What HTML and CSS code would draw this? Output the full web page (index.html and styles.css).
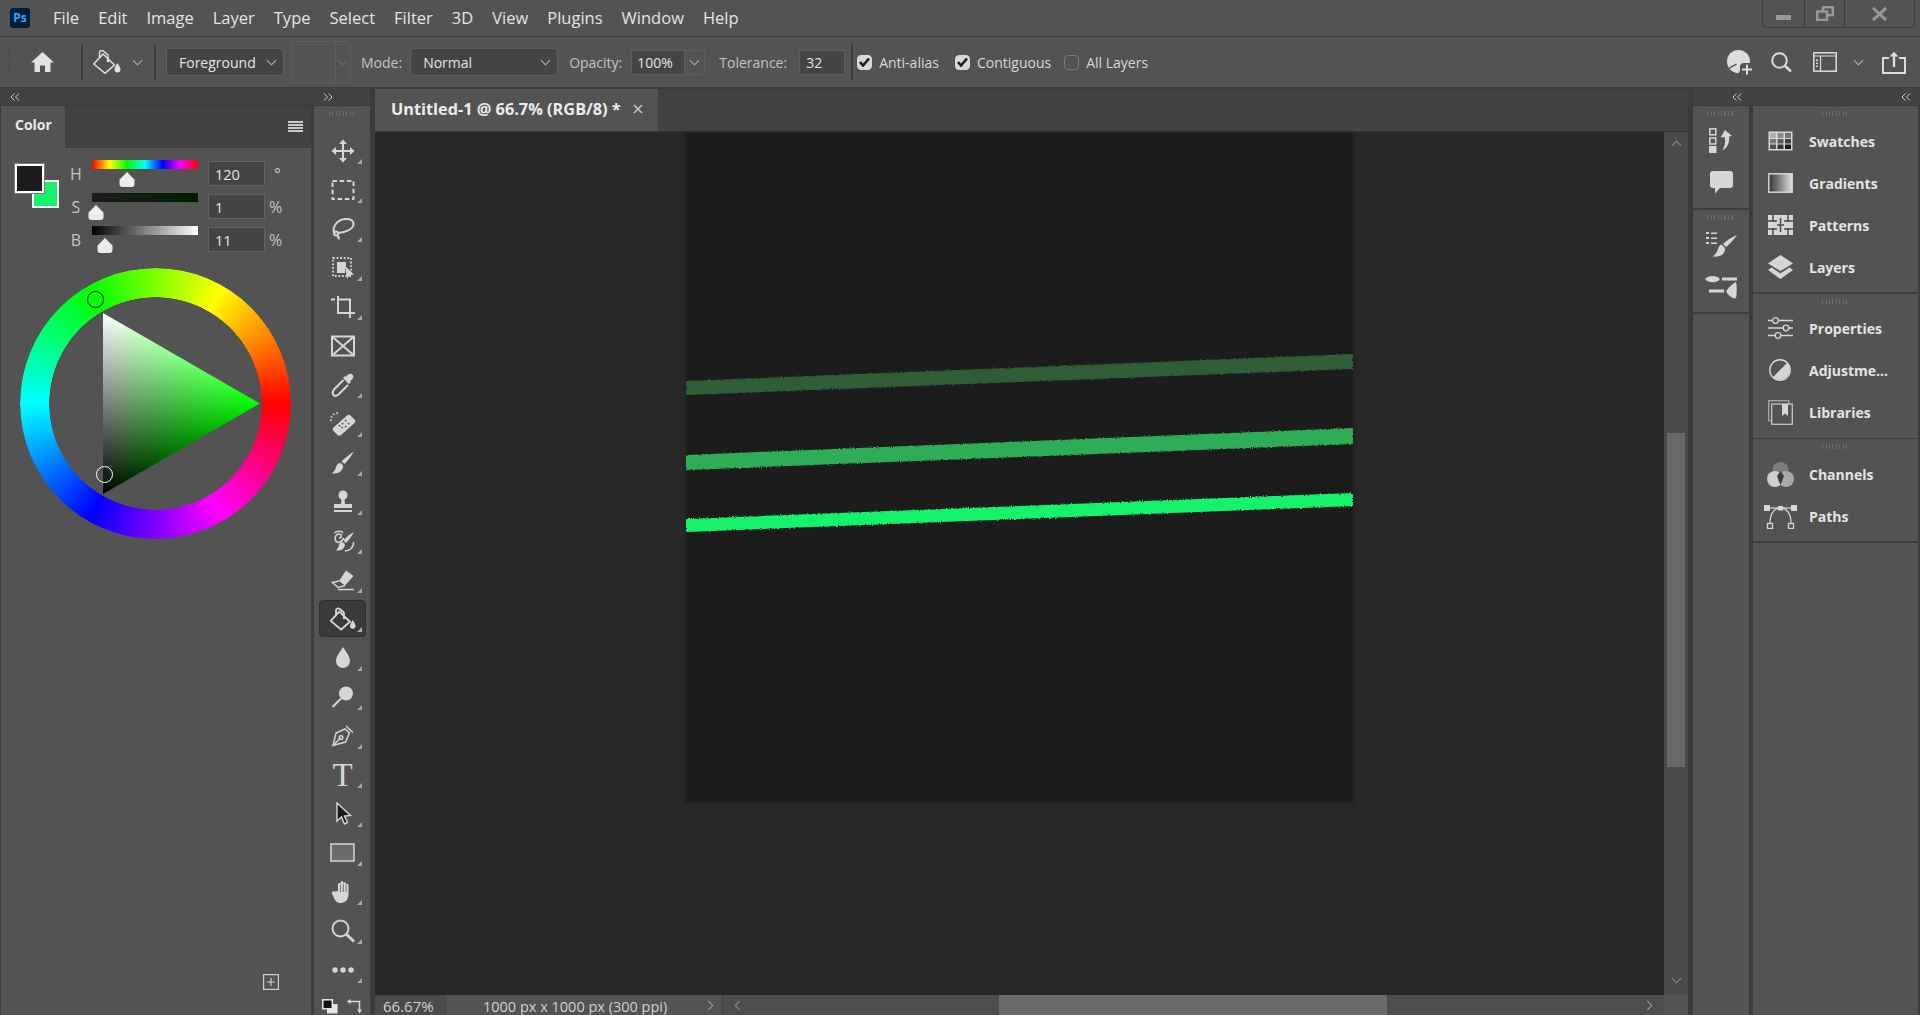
FILE: index.html
```html
<!DOCTYPE html>
<html lang="en">
<head>
    <meta charset="UTF-8">
    <meta name="viewport" content="width=device-width, initial-scale=1.0">
    <title>Untitled-1 @ 66.7% (RGB/8) *</title>
    <link rel="stylesheet" href="styles.css">
</head>
<body>

    <!-- Menu bar -->
    <header class="menubar">
        <div class="ps-logo">Ps</div>
        <nav class="menu">
            <span>File</span>
            <span>Edit</span>
            <span>Image</span>
            <span>Layer</span>
            <span>Type</span>
            <span>Select</span>
            <span>Filter</span>
            <span>3D</span>
            <span>View</span>
            <span>Plugins</span>
            <span>Window</span>
            <span>Help</span>
        </nav>
        <div class="window-controls">
            <div class="win-btn win-min">
                <svg width="15" height="5"><rect width="15" height="5" fill="#999"/></svg>
            </div>
            <div class="win-btn win-restore">
                <svg width="18" height="15" fill="none" stroke="#999" stroke-width="2.4"><rect x="7" y="1.2" width="9.8" height="8"/><rect x="1.2" y="5.5" width="9.8" height="8.3" fill="#535353"/></svg>
            </div>
            <div class="win-btn win-close">
                <svg width="15" height="14" stroke="#999" stroke-width="3"><path d="M1 1l13 12M14 1L1 13"/></svg>
            </div>
        </div>
    </header>

    <!-- Tool options -->
    <section class="optionsbar">
        <div class="gripper-v"></div>
        <svg class="opt-home" width="23" height="20" viewBox="0 0 23 20" fill="#e2e2e2"><path d="M11.5 0 0 10.500h3.500V20h5.500v-6.500h5V20h5.500v-9.500H23z"/></svg>
        <div class="opt-sep sep-home"></div>
        <svg class="opt-bucket" width="28" height="24" viewBox="0 0 28 24" fill="none" stroke="#e2e2e2" stroke-width="1.500">
            <path d="M10 4 .8 14 12 23.300 21.500 15z"/>
            <path d="M6.500 8V3c0-3 3-3 5-1l3.500 3v6"/>
            <circle cx="15" cy="11" r="1.300" fill="#e2e2e2" stroke="none"/>
            <path d="M24.500 13c1.500 2.500 3 4.500 3 6.500a3 3 0 0 1-6 0c0-2 1.500-4 3-6.500z" fill="#e2e2e2" stroke="none"/>
        </svg>
        <div class="chev chev-bucket"></div>
        <div class="opt-sep sep-bucket"></div>
        <div class="dropdown dd-fill">Foreground<div class="chev"></div></div>
        <div class="swatch-off"><div class="chev"></div></div>
        <label class="opt-label lbl-mode">Mode:</label>
        <div class="dropdown dd-mode">Normal<div class="chev"></div></div>
        <label class="opt-label lbl-opacity">Opacity:</label>
        <div class="combo"><span class="combo-value">100%</span><span class="combo-arrow"><span class="chev"></span></span></div>
        <label class="opt-label lbl-tolerance">Tolerance:</label>
        <div class="opt-input">32</div>
        <div class="opt-sep sep-tolerance"></div>
        <div class="check on cb-first"><svg width="11" height="10" viewBox="0 0 11 10"><path d="M1 5l3 3.500L10 1.500" fill="none" stroke="#1c1c1c" stroke-width="2.600"/></svg></div>
        <span class="check-label">Anti-alias</span>
        <div class="check on cb-next"><svg width="11" height="10" viewBox="0 0 11 10"><path d="M1 5l3 3.500L10 1.500" fill="none" stroke="#1c1c1c" stroke-width="2.600"/></svg></div>
        <span class="check-label">Contiguous</span>
        <div class="check cb-last"></div>
        <span class="check-label">All Layers</span>

        <div class="opt-right">
            <svg width="26" height="25" viewBox="0 0 26 25">
                <circle cx="11.500" cy="11.500" r="11.500" fill="#dcdcdc"/>
                <path d="M2.500 18.500C5 15.500 8 15.500 9.500 14M13.500 24l-1-2.500" fill="none" stroke="#535353" stroke-width="1.500"/>
                <path d="M17 13h9v12H13v-8a4 4 0 0 1 4-4z" fill="#535353"/>
                <path d="M20 14.500v10M15 19.500h10" stroke="#dcdcdc" stroke-width="2" fill="none"/>
            </svg>
            <svg width="21" height="20" viewBox="0 0 21 20" fill="none" stroke="#dcdcdc" stroke-width="2"><circle cx="8.500" cy="8.500" r="7.300"/><path d="M13.800 13.800 20 19.500" stroke-width="2.600"/></svg>
            <svg class="opt-ws" width="24" height="20" viewBox="0 0 24 20" fill="none" stroke="#dcdcdc" stroke-width="1.500"><rect x=".8" y=".8" width="22.400" height="18.400"/><path d="M.8 4h22.400M7.500 4v15" stroke-width="1.200"/><path d="M4 7.500v1.500M4 10.500V12M4 13.500V15" stroke-width="2"/></svg>
            <div class="chev"></div>
            <svg class="opt-share" width="24" height="23" viewBox="0 0 24 23" fill="none" stroke="#dcdcdc" stroke-width="2"><path d="M7 7H1v15h22V7h-6"/><path d="M12 16V2" stroke-width="2.400"/><path d="M7.500 5.500 12 .8l4.500 4.700z" fill="#dcdcdc" stroke="none"/></svg>
        </div>
    </section>

    <main class="workspace">

        <!-- Left dock: color panel and tools -->
        <div class="left-dock">
            <div class="dock-head dock-head-left">
                <svg width="10" height="8" viewBox="0 0 10 8" fill="none" stroke="#d0d0d0"><path d="M4.500.5 1 4l3.500 3.500M9 .5 5.500 4 9 7.500"/></svg>
                <svg class="head-expand" width="10" height="8" viewBox="0 0 10 8" fill="none" stroke="#d0d0d0"><path d="M1 .5 4.500 4 1 7.500M5.500.5 9 4 5.500 7.500"/></svg>
            </div>
            <div class="left-body">
                <section class="color-panel">
                    <div class="panel-tabs">
                        <div class="panel-tab">Color</div>
                        <div class="panel-menu"><i></i><i></i><i></i><i></i></div>
                    </div>
                    <div class="color-top">
                        <div class="fg-bg">
                            <div class="bg-swatch"></div>
                            <div class="fg-swatch"></div>
                        </div>
                        <div class="hsb">
                            <div class="hsb-row">
                                <span class="hsb-label">H</span>
                                <div class="slider">
                                    <div class="bar bar-h"></div>
                                    <svg class="thumb" style="margin-left: 27px" width="16" height="15" viewBox="0 0 16 15"><path d="M8 0l7.500 7.500V12a3 3 0 0 1-3 3h-9a3 3 0 0 1-3-3V7.500z" fill="#ececec"/></svg>
                                </div>
                                <div class="hsb-input">120</div>
                                <span class="hsb-unit unit-deg">°</span>
                            </div>
                            <div class="hsb-row">
                                <span class="hsb-label">S</span>
                                <div class="slider">
                                    <div class="bar bar-s"></div>
                                    <svg class="thumb" style="margin-left: -4px" width="16" height="15" viewBox="0 0 16 15"><path d="M8 0l7.500 7.500V12a3 3 0 0 1-3 3h-9a3 3 0 0 1-3-3V7.500z" fill="#ececec"/></svg>
                                </div>
                                <div class="hsb-input">1</div>
                                <span class="hsb-unit">%</span>
                            </div>
                            <div class="hsb-row">
                                <span class="hsb-label">B</span>
                                <div class="slider">
                                    <div class="bar bar-b"></div>
                                    <svg class="thumb" style="margin-left: 5px" width="16" height="15" viewBox="0 0 16 15"><path d="M8 0l7.500 7.500V12a3 3 0 0 1-3 3h-9a3 3 0 0 1-3-3V7.500z" fill="#ececec"/></svg>
                                </div>
                                <div class="hsb-input">11</div>
                                <span class="hsb-unit">%</span>
                            </div>
                        </div>
                    </div>
                    <div class="wheel">
                        <div class="wheel-ring"></div>
                        <div class="wheel-triangle"></div>
                        <div class="marker marker-hue"></div>
                        <div class="marker marker-value"></div>
                    </div>
                    <svg class="panel-add" width="16" height="16" viewBox="0 0 16 16" fill="none" stroke="#d0d0d0" stroke-width="1.200"><rect x=".6" y=".6" width="14.800" height="14.800"/><path d="M8 4v8M4 8h8"/></svg>
                </section>

                <nav class="toolbar">
                    <div class="gripper"></div>
                    <div class="tool more"><svg width="24" height="24" viewBox="0 0 24 24"><path d="M12 .5l4 4.500h-3v6h6V8l4.500 4-4.500 4v-3h-6v6h3l-4 4.500L8 19h3v-6H5v3L.5 12 5 8v3h6V5H8z"/></svg></div>
                    <div class="tool more"><svg class="line" width="24" height="24" viewBox="0 0 24 24"><rect x="1.500" y="3" width="21" height="18" stroke-dasharray="4.500 2.700"/></svg></div>
                    <div class="tool more"><svg class="line" width="24" height="24" viewBox="0 0 24 24"><path d="M4 17C0 12 5 3 14 2c6-.6 9 2 8.500 5.500C22 12 14 16 7 16"/><circle cx="5" cy="16.500" r="2"/><path d="M6 18.500c2 1 2 2.500 1.500 4"/></svg></div>
                    <div class="tool more"><svg width="24" height="24" viewBox="0 0 24 24"><rect x="2" y="2" width="18" height="18" fill="none" stroke="#d6d6d6" stroke-width="1.800" stroke-dasharray="1.800 1.800"/><path d="M6 6h9v6l-1 1v4H6z"/><path d="M14 10l9 8.500-4.500.5-2.500 4z"/></svg></div>
                    <div class="tool more"><svg class="line wide" width="26" height="24" viewBox="0 0 26 24"><path d="M1 4.500h4M8 1v17h14M8 4.500h12V23M22 18h3"/></svg></div>
                    <div class="tool"><svg class="line" width="26" height="24" viewBox="0 0 26 24"><rect x="2" y="2.500" width="22" height="19"/><path d="M2 2.500l22 19M24 2.500l-22 19"/></svg></div>
                    <div class="tool more"><svg width="24" height="24" viewBox="0 0 24 24"><path d="M16 2.500c1.500-2 4-2.500 5.500-1s1 4-1 5.500l-1.500 1 1 1-2 2-6-6 2-2 1 1z"/><path class="stroke-only" d="M12.500 7 3 16.500c-2 3-1.500 4.500-.5 5.500s2.500 1.500 5-.5L17 12"/></svg></div>
                    <div class="tool more"><svg width="26" height="24" viewBox="0 0 26 24"><path d="M17 3.500c1-1 2.500-1 3.500 0l4 4c1 1 1 2.500 0 3.500L11 23c-1 1-2.500 1-3.500 0l-4-4c-1-1-1-2.500 0-3.500z"/><path d="M12 11l1.300 1.300M15 8l1.300 1.300M15 14l1.300 1.300M18 11l1.300 1.300M11.500 15l1.300 1.300M9 13l1.300 1.300" stroke="#535353" stroke-width="1.500"/><path class="stroke-only" d="M1 9C.5 5 3 1 8 1" stroke-dasharray="1.500 2"/></svg></div>
                    <div class="tool more"><svg width="24" height="24" viewBox="0 0 24 24"><path d="M23 .5c-2 3.500-5.500 8-9.500 12.500l-3-2.500C14.500 6.500 19 3 23 .5z"/><path d="M9.500 12c-4 .5-4.500 4-5 5.500-.4 1.500-2 3.500-3.500 5 4 .5 9.500-.5 11-6 .2-1 .2-2-.2-2.500z"/></svg></div>
                    <div class="tool more"><svg width="24" height="24" viewBox="0 0 24 24"><circle cx="12" cy="5" r="4.500"/><path d="M10.500 8h3l.5 6h7v4H3v-4h7z"/><rect x="3" y="20" width="18" height="2"/></svg></div>
                    <div class="tool more"><svg width="24" height="24" viewBox="0 0 24 24"><path class="stroke-only thin-stroke" d="M8 9c3 0 3-4 0-4-4 0-5.500 6-2 8 3 1.500 5-1 7-4M3 4c3-2.500 8-2.500 9 0M14 22c4 0 9-3 8.500-9"/><path d="M23 3c-1.500 3-5 8-8 11l-2.500-2.500C16 7.500 20 4.500 23 3z"/><path d="M11.500 13c-3 .5-3.500 3-4 4.500-.4 1-1.500 3-2.500 4 3.500.5 8-.5 8.800-5 .2-.7 0-1.500-.3-2z"/></svg></div>
                    <div class="tool more"><svg width="24" height="24" viewBox="0 0 24 24"><path d="M15 2.500 22.500 8 14 17.500l-6-4.500z"/><path class="stroke-only thin-stroke" d="M8 13 1.500 14.500 7 19.500l7-2M7 21.500h16"/></svg></div>
                    <div class="tool more active"><svg width="26" height="24" viewBox="0 0 28 24"><path class="stroke-only" d="M10 4 .8 14 12 23.300 21.500 15z" stroke-width="1.700"/><path class="stroke-only" d="M6.500 8V3c0-3 3-3 5-1l3.500 3v6" stroke-width="1.700"/><circle cx="15" cy="11" r="1.300"/><path d="M24.500 13c1.500 2.500 3 4.500 3 6.500a3 3 0 0 1-6 0c0-2 1.500-4 3-6.500z"/></svg></div>
                    <div class="tool more"><svg width="24" height="24" viewBox="0 0 24 24"><path d="M12 1c4 6 7 10 7 14a7 7 0 0 1-14 0c0-4 3-8 7-14z"/></svg></div>
                    <div class="tool more"><svg width="24" height="24" viewBox="0 0 24 24"><circle cx="15" cy="8.500" r="7"/><path class="stroke-only" d="M10 13.500 1.500 22" stroke-width="2"/></svg></div>
                    <div class="tool more"><svg class="line thin" width="24" height="24" viewBox="0 0 24 24"><path d="M14 5 5 9 2 21.500 14.500 18l4-9z"/><path d="M15 2l7 6.500M2 21.500l7-7"/><circle cx="10" cy="13.500" r="1.800"/></svg></div>
                    <div class="tool more"><span class="type-glyph">T</span></div>
                    <div class="tool more"><svg width="24" height="24" viewBox="0 0 24 24"><path d="M6 1v18l4.500-4 3 7 3-1.500-3-6.500 6-.5z" fill="#1a1a1a" stroke="#d6d6d6" stroke-width="1.400"/></svg></div>
                    <div class="tool more"><svg width="26" height="22" viewBox="0 0 26 22"><rect x="1" y="2" width="23" height="17" fill="#6a6a6a" stroke="#d6d6d6" stroke-width="1.500"/></svg></div>
                    <div class="tool more"><svg width="24" height="24" viewBox="0 0 24 24"><path d="M7 11V4.500c0-1.800 2.500-1.800 2.500 0V2.500c0-1.800 2.800-1.800 2.800 0v1c0-1.800 2.700-1.800 2.700 0v1.500c0-1.500 2.500-1.500 2.500.3v8.700c0 5-3 9-7.500 9-4 0-5.500-2-7-5L1 13.500c-1-1.500 1-3 2.500-2z"/><path d="M9.500 5v7M12.300 4v8M15 5v7" stroke="#535353" stroke-width=".8"/></svg></div>
                    <div class="tool more"><svg class="line" width="24" height="24" viewBox="0 0 24 24"><circle cx="9.500" cy="9.500" r="8"/><path d="M15.500 15.500 23 22.500" stroke-width="2.800"/></svg></div>
                    <div class="tool more"><svg width="24" height="8" viewBox="0 0 24 8"><circle cx="4" cy="4" r="2.700"/><circle cx="12" cy="4" r="2.700"/><circle cx="20" cy="4" r="2.700"/></svg></div>
                    <div class="tool-foot">
                        <svg width="16" height="15" viewBox="0 0 16 15"><rect x="5" y="5" width="10.500" height="9.500" fill="#e6e6e6"/><rect x=".8" y=".8" width="9.500" height="9" fill="#111" stroke="#e6e6e6" stroke-width="1.500"/></svg>
                        <svg width="16" height="15" viewBox="0 0 16 15" fill="none" stroke="#d6d6d6" stroke-width="1.500"><path d="M4 2.500h9.500v10"/><path d="M4.500 0 .8 2.500 4.500 5zM11 10.500l2.500 4 2.500-4z" fill="#d6d6d6" stroke="none"/></svg>
                    </div>
                </nav>
            </div>
        </div>

        <!-- Document -->
        <div class="doc-column">
            <div class="tab-strip">
                <div class="doc-tab">
                    <span>Untitled-1 @ 66.7% (RGB/8) *</span>
                    <svg width="10" height="10" viewBox="0 0 10 10" stroke="#cfcfcf" stroke-width="1.400"><path d="M1 1l8 8M9 1 1 9"/></svg>
                </div>
            </div>
            <div class="canvas-row">
                <div class="viewport">
                    <div class="document">
                        <svg width="667" height="669" viewBox="0 0 667 669">
                            <defs>
                                <filter id="rough" x="-2%" y="-20%" width="104%" height="140%">
                                    <feTurbulence type="fractalNoise" baseFrequency="0.9" numOctaves="2" seed="4"/>
                                    <feDisplacementMap in="SourceGraphic" scale="3"/>
                                </filter>
                            </defs>
                            <g filter="url(#rough)">
                                <polygon points="0,248 667,221 667,236 0,262" fill="#2f5d39"/>
                                <polygon points="0,322 667,295 667,311 0,337" fill="#2fad56"/>
                                <polygon points="0,386 667,360 667,373 0,399" fill="#17f26c"/>
                            </g>
                        </svg>
                    </div>
                </div>
                <div class="vscroll">
                    <div class="chev chev-up"></div>
                    <div class="vthumb"></div>
                    <div class="chev chev-bottom"></div>
                </div>
            </div>
            <footer class="statusbar">
                <div class="status-zoom">66.67%</div>
                <div class="status-info">
                    <span>1000 px x 1000 px (300 ppi)</span>
                    <div class="chev chev-right"></div>
                </div>
                <div class="hscroll">
                    <div class="chev chev-left"></div>
                    <div class="hthumb"></div>
                    <div class="chev chev-right chev-end"></div>
                </div>
                <div class="scroll-corner"></div>
            </footer>
        </div>

        <!-- Right dock -->
        <div class="right-dock">
            <div class="dock-head dock-head-right">
                <svg width="10" height="8" viewBox="0 0 10 8" fill="none" stroke="#d0d0d0"><path d="M4.500.5 1 4l3.500 3.500M9 .5 5.500 4 9 7.500"/></svg>
                <svg width="10" height="8" viewBox="0 0 10 8" fill="none" stroke="#d0d0d0"><path d="M4.500.5 1 4l3.500 3.500M9 .5 5.500 4 9 7.500"/></svg>
            </div>
            <div class="right-body">
                <div class="icon-column">
                    <section class="icon-group group-one">
                        <div class="gripper"></div>
                        <svg width="24" height="25" viewBox="0 0 24 25" fill="#d6d6d6">
                            <rect x=".8" y=".8" width="6" height="6" fill="none" stroke="#d6d6d6" stroke-width="1.500"/>
                            <rect x=".8" y="10" width="6" height="6" fill="none" stroke="#d6d6d6" stroke-width="1.500"/>
                            <rect y="18" width="7.500" height="7.500"/>
                            <path d="M16 2l7 6-3 .5c1 5-1.500 12-7 14 2.500-3 4-9 2.500-13.500l-4 .5z"/>
                        </svg>
                        <svg class="dock-gap" width="23" height="23" viewBox="0 0 23 23" fill="#d6d6d6"><path d="M3 0h17a3 3 0 0 1 3 3v11a3 3 0 0 1-3 3H10l-5 5.500V17H3a3 3 0 0 1-3-3V3a3 3 0 0 1 3-3z"/></svg>
                    </section>
                    <section class="icon-group group-two">
                        <div class="gripper"></div>
                        <svg width="31" height="26" viewBox="0 0 31 26" fill="#d6d6d6">
                            <path d="M0 1h3v2H0zM0 6h3v2H0zM0 11h3v2H0zM5 1.500h6v1.500H5zM5 6.500h6V8H5zM5 11.500h6V13H5z"/>
                            <path d="M31 4c-3 4-6 8-11 12l-3-3c4-4 9-7 14-9z"/>
                            <path d="M15.500 13.500c-3 1-3 3.500-4 6-.5 1.500-2 4-5 6 5 .5 11 0 12.500-6.500 0-1 0-2-.5-2.500z"/>
                        </svg>
                        <svg class="dock-gap" width="32" height="25" viewBox="0 0 32 25" fill="#d6d6d6">
                            <path d="M0 5c3-3 9-4.500 14-1 .8.500.8 2 0 2.500-5 3-11 2-14-1.500zM17 3.500h15v3H17zM4 15.500h15v3H4z"/>
                            <path d="M31 8c1 3 1 12 0 16-3 1-6-1-9-5-.8-1-.8-2 0-3 2-3 5-6 9-8z"/>
                        </svg>
                    </section>
                    <section class="icon-group group-fill"></section>
                </div>
                <div class="panel-column">
                    <section class="panel-group group-a">
                        <div class="gripper"></div>
                        <div class="dock-row">
                            <svg width="25" height="20" viewBox="0 0 25 20">
                                <rect x=".5" y=".5" width="24" height="19" fill="#d6d6d6"/>
                                <rect x="2" y="2" width="6" height="5" fill="#b0b0b0"/><rect x="9.500" y="2" width="6" height="5" fill="#8c8c8c"/><rect x="17" y="2" width="6" height="5" fill="#727272"/>
                                <rect x="2" y="8" width="6" height="4.500" fill="#7a7a7a"/><rect x="9.500" y="8" width="6" height="4.500" fill="#5c5c5c"/><rect x="17" y="8" width="6" height="4.500" fill="#404040"/>
                                <rect x="2" y="13.500" width="6" height="4.500" fill="#4e4e4e"/><rect x="9.500" y="13.500" width="6" height="4.500" fill="#333"/><rect x="17" y="13.500" width="6" height="4.500" fill="#1e1e1e"/>
                            </svg>
                            <span>Swatches</span>
                        </div>
                        <div class="dock-row">
                            <svg width="25" height="20" viewBox="0 0 25 20">
                                <defs><linearGradient id="grad-icon"><stop offset="0" stop-color="#333"/><stop offset="1" stop-color="#e0e0e0"/></linearGradient></defs>
                                <rect x=".8" y=".8" width="23.400" height="18.400" fill="url(#grad-icon)" stroke="#d6d6d6" stroke-width="1.500"/>
                            </svg>
                            <span>Gradients</span>
                        </div>
                        <div class="dock-row">
                            <svg width="25" height="20" viewBox="0 0 25 20">
                                <rect width="25" height="20" fill="#d6d6d6"/>
                                <path d="M5 0v7M5 13v7M12.500 3v14M20 0v7M20 13v7M0 6h9M16 6h9M0 14h9M16 14h9M9 10h7" stroke="#4a4a4a" stroke-width="1.500" fill="none"/>
                            </svg>
                            <span>Patterns</span>
                        </div>
                        <div class="dock-row">
                            <svg width="25" height="25" viewBox="0 0 25 25" fill="#d6d6d6">
                                <path d="M12.500 0 25 8.500 12.500 16 0 8.500z"/>
                                <path d="M3.500 12.500 0 15l12.500 9L25 15l-3.500-2.500-9 5.800z"/>
                            </svg>
                            <span>Layers</span>
                        </div>
                    </section>
                    <section class="panel-group group-b">
                        <div class="gripper"></div>
                        <div class="dock-row">
                            <svg width="25" height="22" viewBox="0 0 25 22" fill="#535353" stroke="#d6d6d6" stroke-width="1.300">
                                <path d="M0 3.500h25M0 11h25M0 18.500h25" fill="none"/>
                                <circle cx="7.500" cy="3.500" r="2.800"/><circle cx="18" cy="11" r="2.800"/><circle cx="10" cy="18.500" r="2.800"/>
                            </svg>
                            <span>Properties</span>
                        </div>
                        <div class="dock-row">
                            <svg class="icon-narrow" width="22" height="22" viewBox="0 0 22 22"><circle cx="11" cy="11" r="10.200" fill="none" stroke="#d6d6d6" stroke-width="1.400"/><path d="M18.200 3.800A10.200 10.200 0 0 1 3.800 18.200z" fill="#d6d6d6"/></svg>
                            <span>Adjustme...</span>
                        </div>
                        <div class="dock-row">
                            <svg width="25" height="25" viewBox="0 0 25 25" fill="none" stroke="#a8a8a8" stroke-width="1.300">
                                <rect x=".7" y=".7" width="20" height="20"/>
                                <rect x="3.700" y="4" width="20.600" height="20.300" fill="#535353" stroke="#c4c4c4"/>
                                <path d="M14 4h6v12l-3-2.500-3 2.500z" fill="#d6d6d6" stroke="none"/>
                            </svg>
                            <span>Libraries</span>
                        </div>
                    </section>
                    <section class="panel-group group-c">
                        <div class="gripper"></div>
                        <div class="dock-row">
                            <svg class="icon-channels" width="27" height="25" viewBox="0 0 27 25">
                                <circle cx="13.500" cy="8" r="8" fill="#7c7c7c"/>
                                <circle cx="8" cy="17" r="8" fill="#cfcfcf"/>
                                <circle cx="19" cy="17" r="8" fill="#a8a8a8"/>
                                <path d="M13.500 9l3.500 5-3.500 9-3.500-9z" fill="#3e3e3e"/>
                            </svg>
                            <span>Channels</span>
                        </div>
                        <div class="dock-row">
                            <svg class="icon-wide" width="33" height="25" viewBox="0 0 33 25" fill="none" stroke="#d6d6d6" stroke-width="1.300">
                                <path d="M6 19C6 10 10 4 16.500 4S27 10 27 19"/>
                                <path d="M6 4h21"/>
                                <rect x="0" y="1" width="6" height="6" fill="#d6d6d6" stroke="none"/>
                                <rect x="27" y="1" width="6" height="6" fill="#d6d6d6" stroke="none"/>
                                <rect x="14" y="2" width="5" height="4.500" fill="#d6d6d6" stroke="none"/>
                                <rect x="3.500" y="19.500" width="5" height="5"/>
                                <rect x="24.500" y="19.500" width="5" height="5"/>
                            </svg>
                            <span>Paths</span>
                        </div>
                    </section>
                    <section class="panel-group group-fill"></section>
                </div>
            </div>
        </div>
    </main>

</body>
</html>
```

FILE: styles.css
```css
* {
    box-sizing: border-box;
}

body {
    margin: 0;
    height: 100vh;
    overflow: hidden;
    display: flex;
    flex-direction: column;
    background-color: #3c3c3c;
    color: #d8d8d8;
    font-family: "Open Sans", "Noto Sans", sans-serif;
    font-size: 14px;
}

svg {
    display: block;
    flex: none;
}

/* Menu bar */

.menubar {
    height: 37px;
    flex: none;
    display: flex;
    align-items: center;
    background-color: #535353;
    border-bottom: 1px solid #3c3c3c;
}

.ps-logo {
    width: 20px;
    height: 20px;
    margin-left: 10px;
    border-radius: 3px;
    background-color: #001e36;
    color: #31a8ff;
    font-size: 12px;
    font-weight: 700;
    line-height: 20px;
    text-align: center;
}

.menu {
    display: flex;
    margin-left: 23px;
    padding-bottom: 2px;
    font-size: 16.5px;
    color: #e4e4e4;
}

.menu span {
    margin-right: 19px;
}

.window-controls {
    margin-left: auto;
    margin-right: 5px;
    align-self: flex-start;
    display: flex;
    height: 28px;
    border: 1px solid #3c3c3c;
    border-top: none;
    border-radius: 0 0 5px 5px;
}

.win-btn {
    display: flex;
    justify-content: center;
    align-items: center;
    border-left: 1px solid #3c3c3c;
}

.win-min {
    width: 41px;
    border-left: none;
    align-items: flex-end;
    padding-bottom: 7px;
}

.win-restore {
    width: 40px;
}

.win-close {
    width: 70px;
}

/* Options bar */

.optionsbar {
    height: 51px;
    flex: none;
    display: flex;
    align-items: center;
    background-color: #535353;
    border-bottom: 1px solid #3c3c3c;
}

.gripper-v {
    width: 2px;
    height: 27px;
    margin-left: 8px;
    background: repeating-linear-gradient(#454545 0 1px, transparent 1px 3px);
}

.opt-home {
    margin-left: 21px;
}

.opt-sep {
    width: 2px;
    height: 35px;
    background-color: #3c3c3c;
}

.sep-home {
    margin-left: 27px;
}

.opt-bucket {
    margin-left: 10px;
}

.chev {
    width: 7px;
    height: 7px;
    flex: none;
    border-right: 1px solid #b4b4b4;
    border-bottom: 1px solid #b4b4b4;
    transform: rotate(45deg);
}

.chev-bucket {
    margin-left: 13px;
    margin-top: -4px;
}

.sep-bucket {
    margin-left: 13px;
}

.dropdown {
    height: 28px;
    display: flex;
    align-items: center;
    justify-content: space-between;
    padding: 0 8px 0 12px;
    background-color: #444;
    border: 1px solid #5e5e5e;
    border-radius: 4px;
    color: #e4e4e4;
}

.dropdown .chev {
    margin-top: -3px;
}

.dd-fill {
    width: 118px;
    margin-left: 10px;
}

.swatch-off {
    width: 60px;
    height: 42px;
    margin-left: 7px;
    display: flex;
    justify-content: flex-end;
    align-items: center;
    padding-right: 4px;
    border: 1px solid #5e5e5e;
    border-radius: 4px;
    background: linear-gradient(to right, #535353 43px, #5e5e5e 43px, #5e5e5e 44px, #535353 44px);
}

.swatch-off .chev {
    border-color: #6c6c6c;
    margin-top: -3px;
}

.opt-label {
    color: #c4c4c4;
}

.lbl-mode {
    margin-left: 10px;
}

.dd-mode {
    width: 148px;
    margin-left: 8px;
}

.lbl-opacity {
    margin-left: 11px;
}

.combo {
    width: 74px;
    height: 25px;
    margin-left: 9px;
    display: flex;
    background-color: #444;
    border: 1px solid #5e5e5e;
    border-radius: 3px;
    line-height: 23px;
    color: #e4e4e4;
}

.combo-value {
    width: 53px;
    padding-left: 5px;
    border-right: 1px solid #5e5e5e;
}

.combo-arrow {
    flex: 1;
    display: flex;
    justify-content: center;
    align-items: center;
    background-color: #535353;
}

.combo-arrow .chev {
    margin-top: -3px;
}

.lbl-tolerance {
    margin-left: 14px;
}

.opt-input {
    width: 46px;
    height: 25px;
    margin-left: 12px;
    padding-left: 6px;
    background-color: #444;
    border: 1px solid #5e5e5e;
    line-height: 23px;
    color: #e4e4e4;
}

.sep-tolerance {
    margin-left: 6px;
}

.check {
    width: 15px;
    height: 15px;
    flex: none;
    display: flex;
    justify-content: center;
    align-items: center;
    border: 1px solid #7a7a7a;
    border-radius: 4px;
}

.check.on {
    background-color: #d8d8d8;
    border-color: #d8d8d8;
}

.cb-first {
    margin-left: 4px;
}

.cb-next {
    margin-left: 16px;
}

.cb-last {
    margin-left: 13px;
}

.check-label {
    margin-left: 7px;
    color: #d8d8d8;
}

.opt-right {
    margin-left: auto;
    margin-right: 14px;
    display: flex;
    align-items: center;
    gap: 18px;
}

.opt-right .chev {
    margin-top: -4px;
}

.opt-ws {
    margin-left: 3px;
}

.opt-share {
    margin-left: 2px;
}

/* Layout of the docks */

.workspace {
    flex: 1;
    min-height: 0;
    display: flex;
}

.left-dock {
    width: 370px;
    flex: none;
    display: flex;
    flex-direction: column;
}

.dock-head {
    height: 18px;
    flex: none;
    display: flex;
    align-items: center;
    background-color: #424242;
    border-bottom: 1px solid #393939;
}

.dock-head-left {
    padding-left: 10px;
}

.head-expand {
    margin-left: 303px;
}

.left-body {
    flex: 1;
    min-height: 0;
    display: flex;
    gap: 3px;
}

/* Color panel */

.color-panel {
    width: 311px;
    display: flex;
    flex-direction: column;
    margin-left: 1px;
    background-color: #535353;
}

.panel-tabs {
    height: 42px;
    flex: none;
    display: flex;
    justify-content: space-between;
    background-color: #424242;
    border-bottom: 1px solid #3c3c3c;
}

.panel-tab {
    width: 64px;
    margin-bottom: -1px;
    padding: 9px 0 0 14px;
    background-color: #535353;
    font-weight: 700;
    color: #e8e8e8;
}

.panel-menu {
    width: 15px;
    margin: 15px 8px 0 0;
}

.panel-menu i {
    display: block;
    height: 2px;
    margin-bottom: 1px;
    background-color: #c8c8c8;
}

.color-top {
    display: flex;
    padding: 12px 0 0 13px;
}

.fg-bg {
    position: relative;
    width: 46px;
    height: 46px;
    margin-top: 3px;
}

.fg-swatch {
    position: absolute;
    left: 1px;
    top: 1px;
    width: 29px;
    height: 29px;
    background-color: #1c1c1c;
    border: 2px solid #fff;
    outline: 1px solid #7c7c7c;
}

.bg-swatch {
    position: absolute;
    left: 18px;
    top: 17px;
    width: 27px;
    height: 28px;
    background-color: #17f26c;
    border: 2px solid #fff;
}

.hsb {
    margin-left: 7px;
}

.hsb-row {
    display: grid;
    grid-template-columns: 25px 106px 67px auto;
    height: 33px;
}

.hsb-label {
    padding: 3px 7px 0 0;
    text-align: center;
    font-size: 16px;
    color: #c4c4c4;
}

.bar {
    height: 9px;
}

.bar-h {
    background: linear-gradient(to right, #f00, #ff0 16.6%, #0f0 33.3%, #0ff 50%, #00f 66.6%, #f0f 83.3%, #f00);
}

.bar-s {
    background: linear-gradient(to right, #1c1c1c, #001c00);
}

.bar-b {
    background: linear-gradient(to right, #000, #fff);
}

.thumb {
    margin-top: 3px;
}

.hsb-input {
    height: 25px;
    margin: 1px 0 0 10px;
    padding-left: 6px;
    background-color: #444;
    border: 1px solid #626262;
    line-height: 25px;
    font-size: 14.500px;
    color: #e4e4e4;
}

.hsb-unit {
    padding: 3px 0 0 4px;
    color: #c4c4c4;
    font-size: 16px;
}

.unit-deg {
    padding-left: 9px;
}

.wheel {
    position: relative;
    width: 271px;
    height: 271px;
    margin: 9px 0 0 19px;
}

.wheel-ring {
    width: 100%;
    height: 100%;
    border-radius: 50%;
    background: conic-gradient(from 90deg, #f00, #f0f, #00f, #0ff, #0f0, #ff0, #f00);
    -webkit-mask: radial-gradient(circle, transparent 106px, #000 106.5px);
    mask: radial-gradient(circle, transparent 106px, #000 106.5px);
}

.wheel-triangle {
    position: absolute;
    left: 83px;
    top: 45px;
    width: 157px;
    height: 181px;
    background: linear-gradient(to right, #000, #0f0);
    clip-path: polygon(0 0, 100% 50%, 0 100%);
}

.wheel-triangle::after {
    content: "";
    position: absolute;
    inset: 0;
    background: linear-gradient(150deg, #fff, #000 66.6%);
    mix-blend-mode: plus-lighter;
}

.marker {
    position: absolute;
    width: 17px;
    height: 17px;
    border-radius: 50%;
    border: 1px solid #000;
}

.marker-hue {
    left: 67px;
    top: 23px;
}

.marker-value {
    left: 76px;
    top: 198px;
    border-color: #fff;
}

.panel-add {
    margin: auto 32px 25px auto;
}

/* Tools */

.toolbar {
    width: 56px;
    display: flex;
    flex-direction: column;
    background-color: #535353;
}

.gripper {
    width: 28px;
    height: 5px;
    flex: none;
    margin: 5px auto 0;
    background: repeating-linear-gradient(to right, #6e6e6e 0 1px, transparent 1px 3.500px);
}

.toolbar .gripper {
    margin-bottom: 15px;
    margin-left: 15px;
}

.tool {
    position: relative;
    height: 37px;
    flex: none;
    margin: 1px 4px 1px 5px;
    display: flex;
    justify-content: center;
    align-items: center;
    border: 1px solid transparent;
    border-radius: 4px;
}

.tool.active {
    background-color: #3a3a3a;
    border-color: #2e2e2e;
}

.tool.more::after {
    content: "";
    position: absolute;
    right: 3px;
    bottom: 4px;
    border-style: solid;
    border-width: 0 0 5px 5px;
    border-color: transparent transparent #ababab transparent;
}

.tool svg {
    fill: #d6d6d6;
}

.tool svg.line,
.tool .stroke-only {
    fill: none;
    stroke: #d6d6d6;
    stroke-width: 2;
}

.tool svg.thin,
.tool .thin-stroke {
    stroke-width: 1.500;
}

.type-glyph {
    font-family: "Liberation Serif", serif;
    font-size: 33px;
    line-height: 30px;
    color: #d6d6d6;
}

.tool-foot {
    margin-top: 10px;
    display: flex;
    gap: 8px;
    padding-left: 8px;
}

/* Document */

.doc-column {
    width: 1313px;
    flex: none;
    margin-left: 5px;
    display: flex;
    flex-direction: column;
}

.tab-strip {
    height: 43px;
    flex: none;
    margin-top: 1px;
    display: flex;
    background-color: #424242;
    border-bottom: 1px solid #333;
}

.doc-tab {
    width: 283px;
    display: flex;
    align-items: center;
    gap: 12px;
    padding: 0 0 2px 16px;
    background-color: #535353;
    font-size: 16.300px;
    font-weight: 700;
    color: #ececec;
}

.canvas-row {
    flex: 1;
    min-height: 0;
    display: flex;
}

.viewport {
    flex: 1;
    padding-top: 1px;
    background-color: #282828;
}

.document {
    width: 667px;
    height: 669px;
    margin-left: 311px;
    background-color: #1c1c1c;
    box-shadow: 0 0 6px rgba(0, 0, 0, 0.2);
}

.vscroll {
    width: 24px;
    display: flex;
    flex-direction: column;
    padding: 10px 0 13px;
    background-color: #4a4a4a;
}

.vscroll .chev {
    margin-left: 9px;
    border-color: #8c8c8c;
}

.chev-up {
    transform: rotate(225deg);
}

.vthumb {
    width: 18px;
    height: 334px;
    margin: 284px 0 0 3px;
    background-color: #696969;
}

.chev-bottom {
    margin-top: auto;
}

.statusbar {
    height: 20px;
    flex: none;
    display: flex;
    background-color: #535353;
    font-size: 14.500px;
    line-height: 20px;
    color: #d0d0d0;
}

.status-zoom {
    width: 72px;
    padding: 1px 0 0 8px;
    background-color: #4a4a4a;
    font-size: 15px;
}

.status-info {
    width: 276px;
    display: flex;
    align-items: center;
    justify-content: space-between;
    padding: 0 10px 0 36px;
    border-right: 1px solid #3f3f3f;
}

.status-info span {
    padding-top: 3px;
}

.chev-right {
    transform: rotate(-45deg);
    border-color: #a0a0a0;
}

.hscroll {
    flex: 1;
    display: flex;
    align-items: center;
    background-color: #4d4d4d;
}

.chev-left {
    margin-left: 13px;
    transform: rotate(135deg);
    border-color: #8c8c8c;
}

.hthumb {
    width: 388px;
    height: 20px;
    margin-left: 256px;
    background-color: #696969;
}

.chev-end {
    margin-left: auto;
    margin-right: 13px;
}

.scroll-corner {
    width: 24px;
    background-color: #535353;
}

/* Right dock */

.right-dock {
    width: 227px;
    flex: none;
    margin-left: 5px;
    display: flex;
    flex-direction: column;
}

.dock-head-right {
    justify-content: space-between;
    padding: 0 9px 0 39px;
}

.right-body {
    flex: 1;
    min-height: 0;
    display: flex;
    gap: 4px;
}

.icon-column {
    width: 56px;
    flex: none;
    display: flex;
    flex-direction: column;
    gap: 2px;
}

.icon-group {
    display: flex;
    flex-direction: column;
    align-items: center;
    background-color: #535353;
}

.icon-group .gripper {
    margin-bottom: 12px;
}

.dock-gap {
    margin-top: 18px;
}

.group-one {
    height: 102px;
}

.group-two {
    height: 102px;
}

.group-two .gripper {
    margin-bottom: 11px;
}

.group-two .dock-gap {
    margin-top: 17px;
}

.group-fill {
    flex: 1;
}

.panel-column {
    width: 165px;
    flex: none;
    display: flex;
    flex-direction: column;
    gap: 2px;
}

.panel-group {
    background-color: #535353;
}

.panel-group .gripper {
    margin-bottom: 4px;
}

.group-a {
    height: 186px;
}

.group-b {
    height: 144px;
    margin-bottom: -1px;
}

.group-b .gripper {
    margin-bottom: 3px;
}

.group-c {
    height: 102px;
}

.dock-row {
    height: 42px;
    display: flex;
    align-items: center;
    padding-left: 15px;
    font-weight: 700;
    color: #e4e4e4;
}

.dock-row span {
    margin-left: 16px;
}

.icon-narrow {
    margin: 0 2px 0 1px;
}

.icon-wide {
    margin: 0 -4px 0 -4px;
}

.icon-channels {
    margin: 0 -1px 0 -1px;
}
```
